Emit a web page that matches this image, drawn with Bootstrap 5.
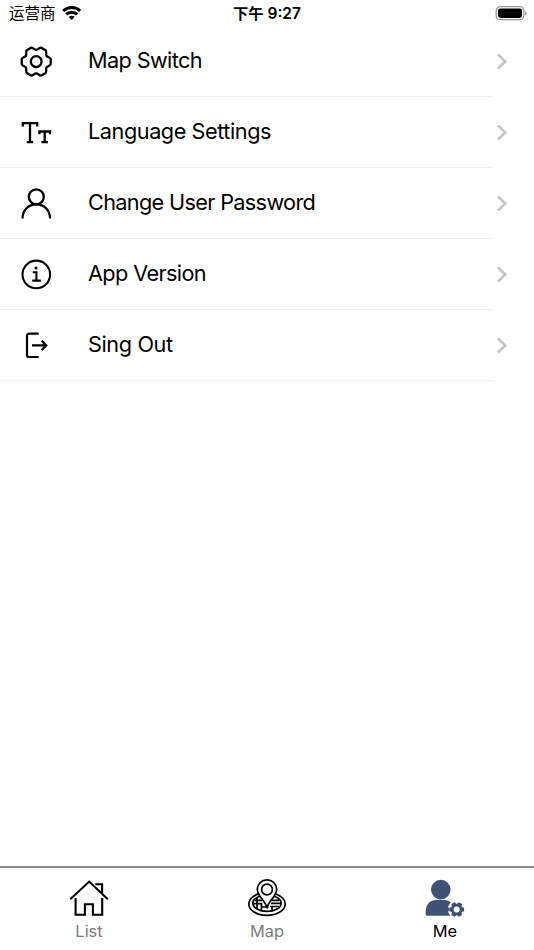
<!DOCTYPE html>
<html lang="en">
<head>
<meta charset="utf-8">
<meta name="viewport" content="width=device-width, initial-scale=1">
<title>Me</title>
<link href="https://cdn.jsdelivr.net/npm/bootstrap@5.3.0/dist/css/bootstrap.min.css" rel="stylesheet">
<style>
body{font-family:Inter,"Noto Sans CJK SC",sans-serif;color:#000;background:#fff;height:950px;overflow:hidden}
svg{display:block;flex:none}
.status{height:26px;padding:0 7px 0 9px;font-size:15.5px;line-height:26px}
.status>div{flex:1 1 0}
.carrier{padding-top:2px}
.clock{font-weight:600;font-size:15.3px;padding:2px 2px 0 0}
.clock span{font-weight:600;font-size:15.5px}
.item{height:71px;padding:0 26px 1px 20px;font-size:21.7px;position:relative}
.item::after{content:"";position:absolute;left:0;right:41px;bottom:0;height:1px;background:#f0f0f2}
.item .ico{width:32px;margin-right:36px}
.item>span{padding-bottom:1px}
.tabs{height:84px;border-top:2px solid #8a8a8a}
.tab{flex:1 1 0;padding-top:10px;font-size:16.4px;color:#7c7c7c;line-height:20px}
.tab.current{color:#000}
.tab svg{margin-bottom:3px}
.w1{letter-spacing:-.62px}.w2{letter-spacing:-.45px}.w3{letter-spacing:-.67px}.w4{letter-spacing:-.62px}.w5{letter-spacing:-.4px}
</style>
</head>
<body class="d-flex flex-column">
<header class="status d-flex align-items-center">
  <div class="d-flex align-items-center"><span class="carrier">运营商</span>
    <svg class="ms-1" width="24" height="16" viewBox="0 0 24 16" fill="none" stroke="#000" stroke-width="3"><path d="M3.2 6a12 12 0 0 1 17 0M6.3 9.4a7.6 7.6 0 0 1 10.8 0"/><path d="M11.7 15 8.7 12a4.2 4.2 0 0 1 6 0z" fill="#000" stroke="none"/></svg>
  </div>
  <div class="clock text-center text-nowrap">下午 <span>9:27</span></div>
  <div class="d-flex justify-content-end">
    <svg width="32" height="16" viewBox="0 0 32 16"><rect x="1.2" y="1.7" width="27.6" height="13" rx="4" fill="none" stroke="#999" stroke-width="1.3"/><rect x="3" y="3.5" width="24" height="9.4" rx="2.3"/><path d="M30 6v4.4q1.6-.7 1.6-2.2T30 6" fill="#999"/></svg>
  </div>
</header>
<main class="flex-grow-1">
  <div class="item d-flex align-items-center">
    <svg class="ico" width="32" height="32" viewBox="-16.2 -16.6 32 32" fill="none" stroke="#000" stroke-width="2.3" stroke-linejoin="round"><path d="M10.2-5.9C11.5-4.2 14.1-4.3 14.5-2.6V2.6C14.1 4.3 11.5 4.2 10.2 5.9 9.3 7.8 10.7 10.1 9.5 11.3L5 13.9C3.3 14.3 2.1 11.8 0 11.8S-3.3 14.3-5 13.9L-9.5 11.3C-10.7 10.1-9.3 7.8-10.2 5.9-11.5 4.2-14.1 4.3-14.5 2.6V-2.6C-14.1-4.3-11.5-4.2-10.2-5.9-9.3-7.8-10.7-10.1-9.5-11.3L-5-13.9C-3.3-14.3-2.1-11.8 0-11.8S3.3-14.3 5-13.9L9.5-11.3C10.7-10.1 9.3-7.8 10.2-5.9z"/><circle r="5.4"/></svg>
    <span class="flex-grow-1 w1">Map Switch</span>
    <svg width="12" height="18" viewBox="0 0 12 18" fill="none" stroke="#c4c4c6" stroke-width="2.5"><path d="m2 2.5 7.3 7L2 16.5"/></svg>
  </div>
  <div class="item d-flex align-items-center">
    <svg class="ico" width="32" height="32" viewBox="0 0 32 32" fill="none" stroke="#000" stroke-width="2.3"><path d="M2.8 10.6V7.1H17.2V10.6M10 7.1V26.2M6.8 26.2h6.4M19.4 18.3v-2.8H30V18.3M24.7 15.5v10.7M21.4 26.2h6.6"/></svg>
    <span class="flex-grow-1 w2">Language Settings</span>
    <svg width="12" height="18" viewBox="0 0 12 18" fill="none" stroke="#c4c4c6" stroke-width="2.5"><path d="m2 2.5 7.3 7L2 16.5"/></svg>
  </div>
  <div class="item d-flex align-items-center">
    <svg class="ico" width="32" height="32" viewBox="0 0 32 32" fill="none" stroke="#000" stroke-width="2.3"><circle cx="16.3" cy="9.8" r="7.5"/><path d="M2.5 31.6C2.5 23 8.6 17.4 16.3 17.4S30.1 23 30.1 31.6"/></svg>
    <span class="flex-grow-1 w3">Change User Password</span>
    <svg width="12" height="18" viewBox="0 0 12 18" fill="none" stroke="#c4c4c6" stroke-width="2.5"><path d="m2 2.5 7.3 7L2 16.5"/></svg>
  </div>
  <div class="item d-flex align-items-center">
    <svg class="ico" width="32" height="32" viewBox="0 0 32 32" fill="none" stroke="#000" stroke-width="2.1"><circle cx="16.3" cy="16.4" r="13.8"/><path d="M12.8 14.2h3.6v8.2M12.2 22.6h8.6"/><circle cx="16" cy="10" r="1.6" fill="#000" stroke="none"/></svg>
    <span class="flex-grow-1 w4">App Version</span>
    <svg width="12" height="18" viewBox="0 0 12 18" fill="none" stroke="#c4c4c6" stroke-width="2.5"><path d="m2 2.5 7.3 7L2 16.5"/></svg>
  </div>
  <div class="item d-flex align-items-center">
    <svg class="ico" width="32" height="32" viewBox="0 0 32 32" fill="none" stroke="#000" stroke-width="2.2"><path d="M18.7 4.6H9a2 2 0 0 0-2 2V26a2 2 0 0 0 2 2h9.7M12 16.4h14M21.7 11.7l4.6 4.7-4.6 4.7"/></svg>
    <span class="flex-grow-1 w5">Sing Out</span>
    <svg width="12" height="18" viewBox="0 0 12 18" fill="none" stroke="#c4c4c6" stroke-width="2.5"><path d="m2 2.5 7.3 7L2 16.5"/></svg>
  </div>
</main>
<nav class="tabs d-flex">
  <div class="tab d-flex flex-column align-items-center">
    <svg width="40" height="40" viewBox="0 0 40 40" fill="none" stroke="#000" stroke-width="2.1"><path d="M1.3 21.3 20.2 3.6l18.6 17.7M6.6 20v16.8h9.3V26.3h8v10.5h9.3V20M26.3 6.3h6.8v9.3"/></svg>
    <span>List</span>
  </div>
  <div class="tab d-flex flex-column align-items-center">
    <svg width="40" height="40" viewBox="0 0 40 40" fill="none" stroke="#000" stroke-width="1.7"><ellipse cx="20" cy="26" rx="18.2" ry="11.3"/><ellipse cx="20" cy="25.2" rx="14.2" ry="8.2"/><path d="M8 22.3h7M6.5 25.7h8V32M25 22.3h7M24 25.3h10M23 28.5h9M10 20v11M25 28v4M14.5 29h7"/><path d="M20 29.3C17.2 21.5 10.3 18 10.3 11.2a9.7 9.3 0 0 1 19.4 0C29.7 18 22.8 21.5 20 29.3z" fill="#fff"/><circle cx="20" cy="11.5" r="5.4"/></svg>
    <span>Map</span>
  </div>
  <div class="tab current d-flex flex-column align-items-center">
    <svg width="40" height="40" viewBox="0 0 40 40"><g fill="#3f5276"><circle cx="15.8" cy="11.6" r="9.8"/><path d="M2.2 37.7Q.6 37.7.6 36C.6 27 3.8 22 11.5 22h8q3.6 0 6.2 2.2l-2.6 4.4 1.3 3-1.3 2.4 2.2 3.7z"/></g><path transform="translate(31.7 31.5)" d="M4.9-2.6 7.4-1.8V1.8L4.9 2.6 5.3 5.5 2.2 7.3 0 5.5-2.2 7.3-5.3 5.5-4.9 2.6-7.4 1.8V-1.8L-4.9-2.6-5.3-5.5-2.2-7.3 0-5.5 2.2-7.3 5.3-5.5z" fill="#3f5276"/><circle cx="31.7" cy="31.5" r="3" fill="#fff"/></svg>
    <span>Me</span>
  </div>
</nav>
<script src="https://cdn.jsdelivr.net/npm/bootstrap@5.3.0/dist/js/bootstrap.bundle.min.js"></script>
</body>
</html>
